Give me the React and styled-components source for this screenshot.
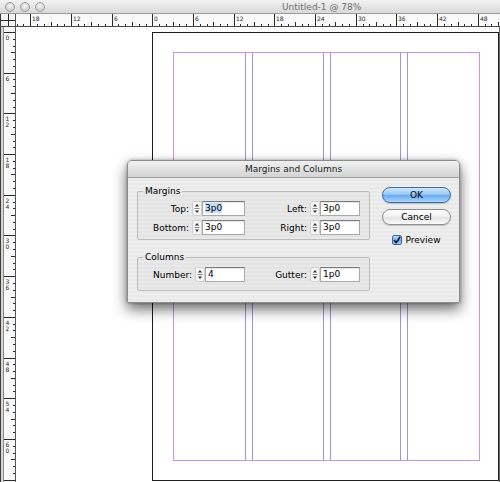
import React from "react";
import styled, { createGlobalStyle } from "styled-components";

const PICA = 6.783;
const FONT = `"DejaVu Sans", Verdana, sans-serif`;

const GlobalStyle = createGlobalStyle`
  html, body { margin: 0; padding: 0; background: #fff; }
  body { width: 500px; height: 482px; overflow: hidden; font-family: ${FONT}; }
  * { box-sizing: border-box; }
`;

const Window = styled.div`
  position: relative;
  width: 500px;
  height: 482px;
  display: flex;
  flex-direction: column;
  background: #fff;
  overflow: hidden;
`;

const TitleBar = styled.div`
  height: 14px;
  flex: none;
  display: flex;
  align-items: center;
  background: linear-gradient(#f3f3f3, #d8d8d8);
  border-bottom: 1px solid #9a9a9a;
`;

const Lights = styled.div`
  display: flex;
  gap: 5px;
  padding-left: 5px;
`;

const Light = styled.span`
  width: 10px;
  height: 10px;
  border-radius: 50%;
  border: 1px solid #9c9c9c;
  background: radial-gradient(circle at 50% 35%, #f7f7f7, #cfcfcf 70%, #b8b8b8);
`;

const WindowTitle = styled.span`
  margin-left: 237px;
  font-size: 9px;
  line-height: 12px;
  color: #707070;
  white-space: nowrap;
`;

const RulerRow = styled.div`
  height: 13px;
  flex: none;
  display: flex;
  border-bottom: 1px solid #4a4a4a;
`;

const Corner = styled.div`
  width: 16px;
  flex: none;
  border-left: 1px solid #3c3c3c;
  border-right: 1px solid #555;
  background: #f4f4f4;
  display: flex;
`;

const HRuler = styled.div`
  flex: 1;
  background: #f9f9f9;
  display: flex;
  overflow: hidden;
`;

const BodyRow = styled.div`
  flex: 1;
  display: flex;
  min-height: 0;
`;

const VRuler = styled.div`
  width: 16px;
  flex: none;
  display: flex;
  border-left: 1px solid #3c3c3c;
  padding-left: 2px;
  background: #d6d6d6;
`;

const VRulerBody = styled.div`
  flex: 1;
  background: #f9f9f9;
  border-left: 1px solid #8a8a8a;
  border-right: 1px solid #555;
  display: flex;
  overflow: hidden;
`;

const Canvas = styled.div`
  flex: 1;
  background: #fff;
  padding: 5px 0 0 136px;
  border-right: 1px solid #6a6a6a;
`;

const Page = styled.div`
  width: 347px;
  height: 449px;
  border: 1px solid #1c1c1c;
  padding: 19px 18px 19px 20px;
  background: #fff;
  display: flex;
`;

const MarginBox = styled.div`
  flex: 1;
  border: 1px solid #c993e0;
  display: grid;
  grid-template-columns: repeat(4, 1fr);
  column-gap: 6px;
`;

const ColumnGuide = styled.div`
  border-left: ${(p) => (p.$first ? "none" : "1px solid #a292e0")};
  border-right: ${(p) => (p.$last ? "none" : "1px solid #a292e0")};
`;

const RulerSvg = styled.svg`
  display: block;
  flex: none;
  overflow: visible;
  & line { stroke: #2a2a2a; stroke-width: 1; shape-rendering: crispEdges; }
  & text { font-family: ${FONT}; font-size: 6px; fill: #2a2a2a; }
`;

/* ---------- Dialog ---------- */

const Dialog = styled.div`
  position: absolute;
  left: 127px;
  top: 160px;
  width: 333px;
  height: 143px;
  border: 1px solid #8c8c8c;
  border-radius: 5px 5px 1px 1px;
  background: repeating-linear-gradient(180deg, #eeeeee 0 2px, #e9e9e9 2px 4px);
  box-shadow: 0 6px 14px rgba(0, 0, 0, 0.6), 0 0 3px rgba(0, 0, 0, 0.35);
  display: flex;
  flex-direction: column;
  font-family: ${FONT};
  font-size: 9px;
  color: #000;
`;

const DialogTitle = styled.div`
  height: 17px;
  flex: none;
  border-bottom: 1px solid #9c9c9c;
  border-radius: 4px 4px 0 0;
  background: linear-gradient(#f1f1f1, #d3d3d3);
  display: flex;
  align-items: center;
  justify-content: center;
  color: #1c1c1c;
  line-height: 12px;
`;

const DialogBody = styled.div`
  display: flex;
  padding: 7px 0 0 9px;
`;

const LeftColumn = styled.div`
  width: 233px;
  display: flex;
  flex-direction: column;
  gap: 11px;
`;

const Group = styled.fieldset`
  margin: 0;
  min-width: 0;
  padding: 4px 0 ${(p) => p.$pb}px 0;
  border: 1px solid #bcbcbc;
  border-radius: 2px;
  background: rgba(0, 0, 0, 0.02);
`;

const Legend = styled.legend`
  margin-left: 5px;
  padding: 0 2px;
  font-size: 9px;
  line-height: 12px;
  height: 12px;
`;

const Rows = styled.div`
  display: flex;
  flex-direction: column;
  gap: 4px;
`;

const Row = styled.div`
  display: flex;
  align-items: center;
  height: 15px;
`;

const Label = styled.span`
  width: ${(p) => p.$w}px;
  padding-right: 3px;
  text-align: right;
  white-space: nowrap;
  line-height: 12px;
`;

const Field = styled.div`
  width: ${(p) => p.$w}px;
  height: 15px;
  border: 1px solid #a8a8a8;
  border-top-color: #7a7a7a;
  background: #fff;
  box-shadow: inset 0 1px 1px rgba(0, 0, 0, 0.1);
  padding: 0 0 0 2px;
  line-height: 13px;
  white-space: nowrap;
`;

const Selected = styled.span`
  background: #c2dcfb;
`;

const RightColumn = styled.div`
  width: 69px;
  margin-left: 12px;
  padding-top: 2px;
  display: flex;
  flex-direction: column;
  align-items: center;
`;

const PushButton = styled.button`
  width: 69px;
  height: 16px;
  padding: 0;
  margin-bottom: 6px;
  border-radius: 8px;
  font-family: ${FONT};
  font-size: 9px;
  line-height: 12px;
  color: #000;
  border: 1px solid ${(p) => (p.$primary ? "#3b6ea8" : "#8e8e8e")};
  background: ${(p) =>
    p.$primary
      ? "linear-gradient(#cfe6fc 0%, #99c9f5 45%, #6aaaf0 52%, #a9d6fd 100%)"
      : "linear-gradient(#ffffff 0%, #f3f3f3 45%, #e3e3e3 52%, #fbfbfb 100%)"};
  box-shadow: 0 1px 1px rgba(0, 0, 0, 0.18);
`;

const CheckRow = styled.label`
  display: flex;
  align-items: center;
  gap: 3px;
  margin-top: 3px;
  line-height: 12px;
`;

const CheckBox = styled.span`
  width: 10px;
  height: 10px;
  border: 1px solid #3a6aa3;
  border-radius: 2px;
  background: linear-gradient(#bfdffb, #6aa8ec 55%, #9ccdf9);
  display: flex;
  align-items: center;
  justify-content: center;
`;

function Spinner() {
  return (
    <svg width="10" height="15" viewBox="0 0 10 15" style={{ display: "block", flex: "none" }}>
      <rect x="0.5" y="0.5" width="9" height="14" rx="1.5" fill="#f5f5f5" stroke="#d0d0d0" />
      <path d="M5 3 L7 5.6 H3Z" fill="#333" />
      <line x1="2.5" x2="7.5" y1="7.5" y2="7.5" stroke="#8a8a8a" strokeWidth="1" />
      <path d="M5 12 L7 9.4 H3Z" fill="#333" />
    </svg>
  );
}

function HRulerTicks() {
  const w = 484;
  const h = 12;
  const origin = 136.3;
  const items = [];
  for (let k = -21; k <= 52; k++) {
    const x = origin + k * PICA;
    if (x < -1 || x > w) continue;
    const xr = Math.round(x) + 0.5;
    if (k % 6 === 0) {
      items.push(<line key={"l" + k} x1={xr} x2={xr} y1={0} y2={h} />);
      if (xr + 10 < w) {
        items.push(
          <text key={"t" + k} x={xr + 1.5} y={6.5}>
            {Math.abs(k)}
          </text>
        );
      }
    } else if (k % 3 === 0) {
      items.push(<line key={"l" + k} x1={xr} x2={xr} y1={h - 4} y2={h} />);
    } else {
      items.push(<line key={"l" + k} x1={xr} x2={xr} y1={h - 2} y2={h} />);
    }
  }
  return (
    <RulerSvg width={w} height={h}>
      {items}
    </RulerSvg>
  );
}

function VRulerTicks() {
  const w = 11;
  const h = 455;
  const origin = 5;
  const items = [];
  for (let k = 0; k <= 70; k++) {
    const y = origin + k * PICA;
    if (y > h) continue;
    const yr = Math.round(y) + 0.5;
    if (k % 6 === 0) {
      items.push(<line key={"l" + k} x1={0} x2={w} y1={yr} y2={yr} />);
      const digits = String(k).split("");
      if (yr + 7 + (digits.length - 1) * 6.5 < h - 2) {
        digits.forEach((d, i) => {
          items.push(
            <text key={"t" + k + "_" + i} x={1.5} y={yr + 7 + i * 6.5}>
              {d}
            </text>
          );
        });
      }
    } else if (k % 3 === 0) {
      items.push(<line key={"l" + k} x1={w - 4} x2={w} y1={yr} y2={yr} />);
    } else {
      items.push(<line key={"l" + k} x1={w - 2} x2={w} y1={yr} y2={yr} />);
    }
  }
  return (
    <RulerSvg width={w} height={h}>
      {items}
    </RulerSvg>
  );
}

function CornerMark() {
  return (
    <RulerSvg width="14" height="12">
      <line x1="7.5" x2="7.5" y1="0" y2="12" />
      <line x1="0" x2="14" y1="6.5" y2="6.5" />
    </RulerSvg>
  );
}

export default function App() {
  return (
    <>
      <GlobalStyle />
      <Window>
        <TitleBar>
          <Lights>
            <Light />
            <Light />
            <Light />
          </Lights>
          <WindowTitle>Untitled-1 @ 78%</WindowTitle>
        </TitleBar>
        <RulerRow>
          <Corner>
            <CornerMark />
          </Corner>
          <HRuler>
            <HRulerTicks />
          </HRuler>
        </RulerRow>
        <BodyRow>
          <VRuler>
            <VRulerBody>
              <VRulerTicks />
            </VRulerBody>
          </VRuler>
          <Canvas>
            <Page>
              <MarginBox>
                <ColumnGuide $first />
                <ColumnGuide />
                <ColumnGuide />
                <ColumnGuide $last />
              </MarginBox>
            </Page>
          </Canvas>
        </BodyRow>

        <Dialog>
          <DialogTitle>Margins and Columns</DialogTitle>
          <DialogBody>
            <LeftColumn>
              <Group $pb={4}>
                <Legend>Margins</Legend>
                <Rows>
                  <Row>
                    <Label $w={54}>Top:</Label>
                    <Spinner />
                    <Field $w={43}>
                      <Selected>3p0</Selected>
                    </Field>
                    <Label $w={65}>Left:</Label>
                    <Spinner />
                    <Field $w={40}>3p0</Field>
                  </Row>
                  <Row>
                    <Label $w={54}>Bottom:</Label>
                    <Spinner />
                    <Field $w={43}>3p0</Field>
                    <Label $w={65}>Right:</Label>
                    <Spinner />
                    <Field $w={40}>3p0</Field>
                  </Row>
                </Rows>
              </Group>
              <Group $pb={8}>
                <Legend>Columns</Legend>
                <Rows>
                  <Row>
                    <Label $w={57}>Number:</Label>
                    <Spinner />
                    <Field $w={40}>4</Field>
                    <Label $w={65}>Gutter:</Label>
                    <Spinner />
                    <Field $w={40}>1p0</Field>
                  </Row>
                </Rows>
              </Group>
            </LeftColumn>
            <RightColumn>
              <PushButton $primary>OK</PushButton>
              <PushButton>Cancel</PushButton>
              <CheckRow>
                <CheckBox>
                  <svg width="8" height="8" viewBox="0 0 8 8">
                    <path d="M1 4.2 L3.2 6.6 L7.2 0.8" fill="none" stroke="#0d1b2a" strokeWidth="1.6" />
                  </svg>
                </CheckBox>
                Preview
              </CheckRow>
            </RightColumn>
          </DialogBody>
        </Dialog>
      </Window>
    </>
  );
}
